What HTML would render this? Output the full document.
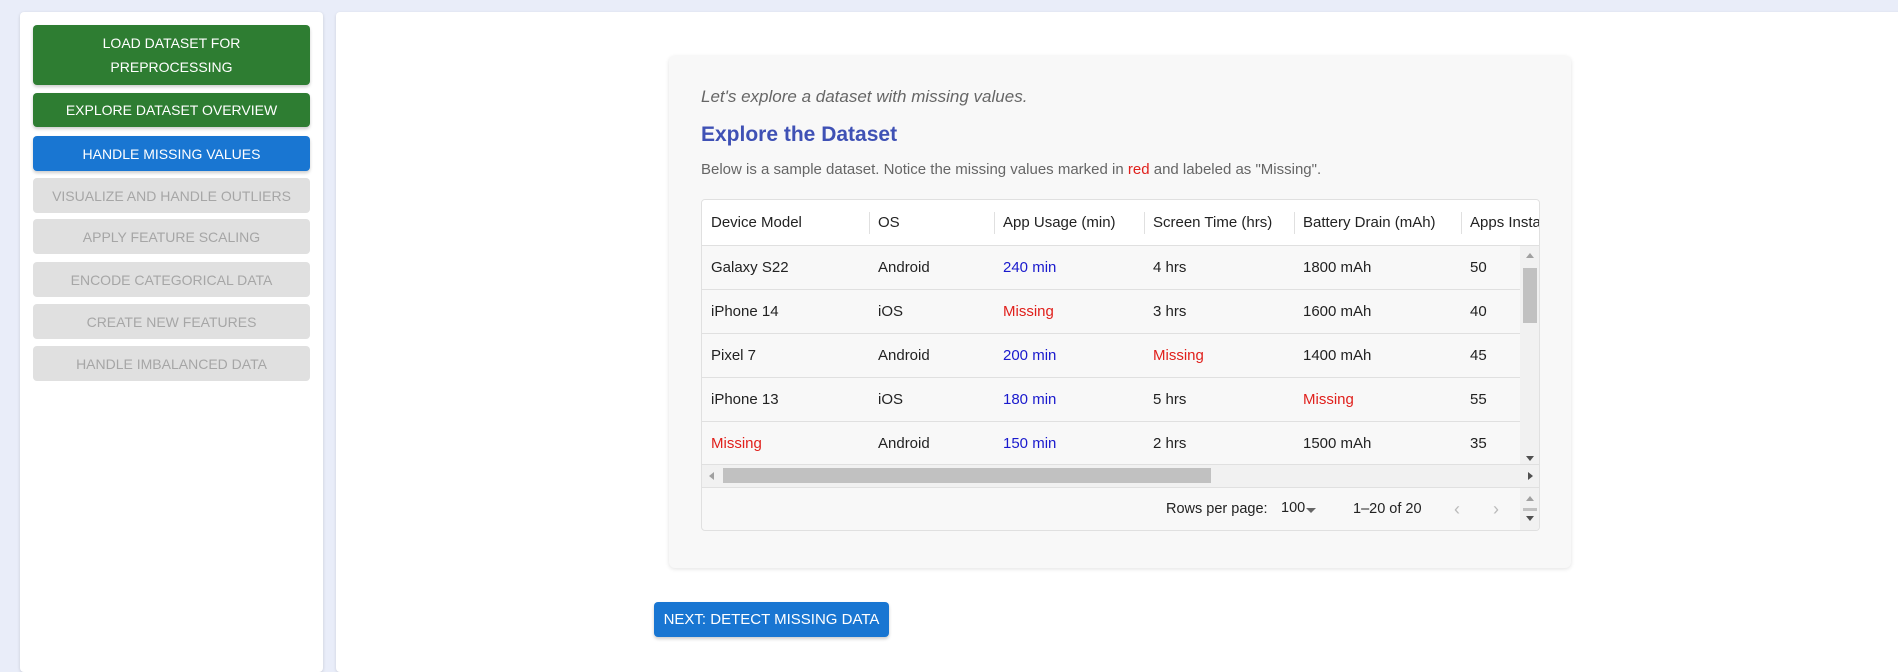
<!DOCTYPE html>
<html><head><style>
*{box-sizing:border-box;margin:0;padding:0}
body{width:1898px;height:660px;overflow:hidden;background:#e9edf9;font-family:"Liberation Sans",Arial,sans-serif;position:relative}
.side{position:absolute;left:20px;top:12px;width:303px;height:660px;background:#fff;border-radius:4px;box-shadow:0 1px 3px rgba(0,0,0,.15)}
.btn{position:absolute;left:13px;width:277px;border-radius:4px;color:#fff;font-size:14px;text-align:center;display:flex;align-items:center;justify-content:center;line-height:24px;box-shadow:0 2px 3px rgba(0,0,0,.2)}
.g{background:#2e7d32}.b{background:#1976d2}.d{background:#e0e0e0;color:#a6a6a6;box-shadow:none}
.main{position:absolute;left:336px;top:12px;width:1570px;height:660px;background:#fff;border-radius:4px;box-shadow:0 1px 3px rgba(0,0,0,.12)}
.card{position:absolute;left:669px;top:56px;width:902px;height:512px;background:#f8f8f8;border-radius:6px;box-shadow:0 1px 4px rgba(0,0,0,.12)}
.t{position:absolute;font-size:15px;color:#222;white-space:nowrap}
.tbl{position:absolute;left:701px;top:199px;width:839px;height:332px;border:1px solid #e0e0e0;border-radius:4px;background:#f8f8f8;overflow:hidden}
.hdr{position:absolute;left:0;top:0;width:100%;height:46px;background:#fff;border-bottom:1px solid #e0e0e0}
.row{position:absolute;left:0;width:818px;height:44px;border-bottom:1px solid #e0e0e0}
.c{position:absolute;top:0;line-height:43px;font-size:15px;color:#222;white-space:nowrap}
.red{color:#e0201c}.blu{color:#1a1acd}
.sep{position:absolute;top:12px;width:1px;height:22px;background:#e0e0e0}
</style></head><body>
<div class="side">
<div class="btn g" style="top:13px;height:60px">LOAD DATASET FOR<br>PREPROCESSING</div>
<div class="btn g" style="top:81px;height:34px">EXPLORE DATASET OVERVIEW</div>
<div class="btn b" style="top:124px;height:35px">HANDLE MISSING VALUES</div>
<div class="btn d" style="top:166px;height:35px">VISUALIZE AND HANDLE OUTLIERS</div>
<div class="btn d" style="top:207px;height:35px">APPLY FEATURE SCALING</div>
<div class="btn d" style="top:250px;height:35px">ENCODE CATEGORICAL DATA</div>
<div class="btn d" style="top:292px;height:35px">CREATE NEW FEATURES</div>
<div class="btn d" style="top:334px;height:35px">HANDLE IMBALANCED DATA</div>
</div>
<div class="main"></div>
<div class="card"></div>
<div class="t" style="left:701px;top:87px;font-size:17px;font-style:italic;color:#666">Let's explore a dataset with missing values.</div>
<div class="t" style="left:701px;top:123px;font-size:21px;font-weight:bold;color:#3f51b5">Explore the Dataset</div>
<div class="t" style="left:701px;top:161px;font-size:15px;color:#666">Below is a sample dataset. Notice the missing values marked in <span class="red">red</span> and labeled as "Missing".</div>
<div class="tbl">
<div class="hdr">
<div class="c" style="left:9px;line-height:45px">Device Model</div><div class="sep" style="left:167px"></div>
<div class="c" style="left:176px;line-height:45px">OS</div><div class="sep" style="left:292px"></div>
<div class="c" style="left:301px;line-height:45px">App Usage (min)</div><div class="sep" style="left:442px"></div>
<div class="c" style="left:451px;line-height:45px">Screen Time (hrs)</div><div class="sep" style="left:592px"></div>
<div class="c" style="left:601px;line-height:45px">Battery Drain (mAh)</div><div class="sep" style="left:759px"></div>
<div class="c" style="left:768px;line-height:45px">Apps Insta</div>
</div>
<div class="row" style="top:46px"><div class="c" style="left:9px">Galaxy S22</div><div class="c" style="left:176px">Android</div><div class="c blu" style="left:301px">240 min</div><div class="c" style="left:451px">4 hrs</div><div class="c" style="left:601px">1800 mAh</div><div class="c" style="left:768px">50</div></div>
<div class="row" style="top:90px"><div class="c" style="left:9px">iPhone 14</div><div class="c" style="left:176px">iOS</div><div class="c red" style="left:301px">Missing</div><div class="c" style="left:451px">3 hrs</div><div class="c" style="left:601px">1600 mAh</div><div class="c" style="left:768px">40</div></div>
<div class="row" style="top:134px"><div class="c" style="left:9px">Pixel 7</div><div class="c" style="left:176px">Android</div><div class="c blu" style="left:301px">200 min</div><div class="c red" style="left:451px">Missing</div><div class="c" style="left:601px">1400 mAh</div><div class="c" style="left:768px">45</div></div>
<div class="row" style="top:178px"><div class="c" style="left:9px">iPhone 13</div><div class="c" style="left:176px">iOS</div><div class="c blu" style="left:301px">180 min</div><div class="c" style="left:451px">5 hrs</div><div class="c red" style="left:601px">Missing</div><div class="c" style="left:768px">55</div></div>
<div class="row" style="top:222px;border-bottom:none"><div class="c" style="left:9px" ><span class="red">Missing</span></div><div class="c" style="left:176px">Android</div><div class="c blu" style="left:301px">150 min</div><div class="c" style="left:451px">2 hrs</div><div class="c" style="left:601px">1500 mAh</div><div class="c" style="left:768px">35</div></div>
<div style="position:absolute;left:818px;top:46px;width:19px;height:218px;background:#f1f1f1"></div>
<div style="position:absolute;left:821px;top:68px;width:14px;height:55px;background:#c1c1c1"></div>
<div style="position:absolute;left:824px;top:53px;border:4px solid transparent;border-bottom:5px solid #a0a0a0;border-top:none"></div>
<div style="position:absolute;left:824px;top:256px;border:4px solid transparent;border-top:5px solid #505050;border-bottom:none"></div>
<div style="position:absolute;left:0;top:264px;width:837px;height:24px;background:#f1f1f1;border-top:1px solid #e0e0e0;border-bottom:1px solid #e0e0e0"></div>
<div style="position:absolute;left:21px;top:268px;width:488px;height:15px;background:#c1c1c1"></div>
<div style="position:absolute;left:7px;top:272px;border:4px solid transparent;border-right:5px solid #a0a0a0;border-left:none"></div>
<div style="position:absolute;left:826px;top:272px;border:4px solid transparent;border-left:5px solid #505050;border-right:none"></div>
<div class="c" style="left:464px;top:288px;line-height:42px;font-size:14.5px">Rows per page:</div>
<div class="c" style="left:579px;top:287px;line-height:42px;font-size:14.5px">100</div>
<div style="position:absolute;left:604px;top:308px;border:5px solid transparent;border-top:5px solid #666;border-bottom:none"></div>
<div class="c" style="left:651px;top:288px;line-height:42px;font-size:14.5px">1–20 of 20</div>
<div class="c" style="left:752px;top:288px;line-height:42px;font-size:18px;color:#bbb">‹</div>
<div class="c" style="left:791px;top:288px;line-height:42px;font-size:18px;color:#bbb">›</div>
<div style="position:absolute;left:818px;top:288px;width:19px;height:44px;background:#f1f1f1"></div>
<div style="position:absolute;left:824px;top:296px;border:4px solid transparent;border-bottom:5px solid #a0a0a0;border-top:none"></div>
<div style="position:absolute;left:821px;top:308px;width:14px;height:3px;background:#c1c1c1"></div>
<div style="position:absolute;left:824px;top:316px;border:4px solid transparent;border-top:5px solid #505050;border-bottom:none"></div>
</div>
<div class="btn b" style="left:654px;top:602px;width:235px;height:35px;font-size:15px">NEXT: DETECT MISSING DATA</div>
</body></html>
